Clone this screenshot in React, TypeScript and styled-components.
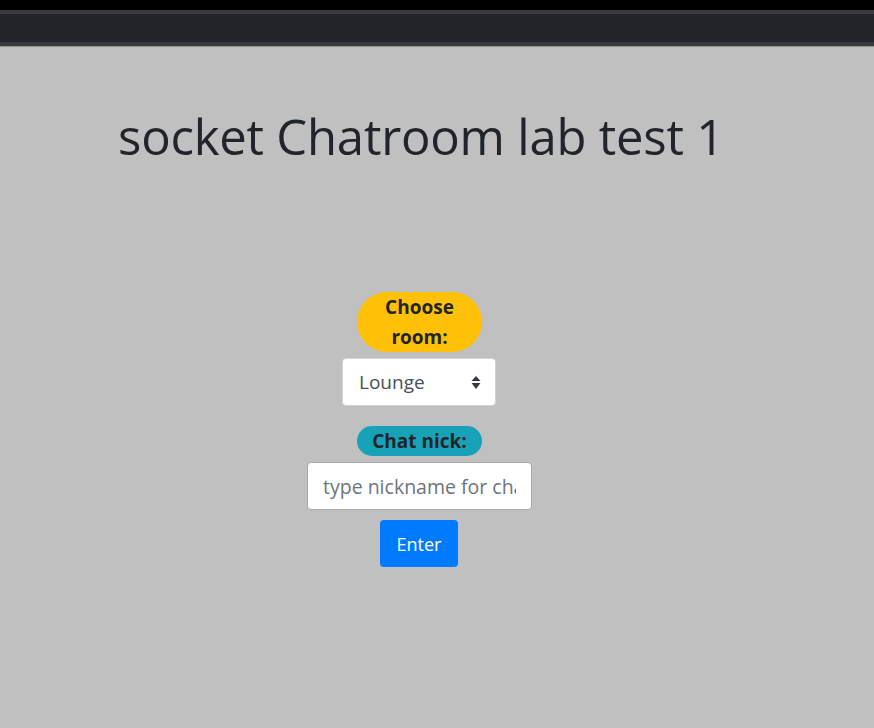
import React from "react";
import styled, { createGlobalStyle } from "styled-components";

const GlobalStyle = createGlobalStyle`
  html, body {
    margin: 0;
    padding: 0;
    background: #c0c0c0;
    font-family: "Open Sans", "Noto Sans", sans-serif;
    color: #212529;
  }
`;

const Page = styled.div`
  min-height: 728px;
  background: #c0c0c0;
`;

const TopStrip = styled.div`
  height: 10px;
  background: #000;
`;

const Navbar = styled.div`
  height: 28px;
  background: #212529;
  border-top: 4px solid #3a3a3c;
  border-bottom: 4px solid #3a3a3c;
  box-shadow: 0 1px 0 #8e8e8e;
`;

const Heading = styled.h1`
  margin: 0;
  padding: 52px 0 0 118px;
  height: 77px;
  font-size: 49px;
  font-weight: 500;
  line-height: 77px;
  letter-spacing: -0.2px;
  color: #212529;
`;

const Form = styled.div`
  display: flex;
  flex-direction: column;
  align-items: center;
  padding: 117px 35px 0 0;
`;

const Badge = styled.div<{ $bg: string }>`
  width: 125px;
  box-sizing: border-box;
  padding: 0 12px;
  border-radius: 30px;
  background: ${(p) => p.$bg};
  color: #212529;
  font-size: 19px;
  font-weight: 700;
  line-height: 30px;
  text-align: center;
`;

const SelectBox = styled.div`
  display: flex;
  align-items: center;
  justify-content: space-between;
  box-sizing: border-box;
  width: 154px;
  height: 48px;
  margin: 6px 1px 0 0;
  padding: 0 14px 0 16px;
  background: #fff;
  border: 1px solid #ced4da;
  border-radius: 4px;
  font-size: 19px;
  color: #495057;
`;

const Arrows = styled.svg`
  width: 10px;
  height: 16px;
`;

const Spacer = styled.div`
  height: 20px;
`;

const Input = styled.input`
  box-sizing: border-box;
  width: 225px;
  height: 48px;
  margin-top: 6px;
  padding: 0 15px;
  background: #fff;
  border: 1px solid #a8a8a8;
  border-radius: 4px;
  font-family: inherit;
  font-size: 19.5px;
  color: #495057;
  outline: none;
  &::placeholder {
    color: #6c757d;
  }
`;

const Button = styled.button`
  box-sizing: border-box;
  width: 78px;
  height: 47px;
  margin: 10px 1px 0 0;
  border: none;
  border-radius: 4px;
  background: #007bff;
  color: #fff;
  font-family: inherit;
  font-size: 18px;
`;

export default function App() {
  return (
    <Page>
      <GlobalStyle />
      <TopStrip />
      <Navbar />
      <Heading>socket Chatroom lab test 1</Heading>
      <Form>
        <Badge $bg="#ffc107">Choose room:</Badge>
        <SelectBox>
          <span>Lounge</span>
          <Arrows viewBox="0 0 10 16">
            <path d="M5 2 L9.5 7 H0.5 Z" fill="#343a40" />
            <path d="M5 15 L9.5 9 H0.5 Z" fill="#343a40" />
          </Arrows>
        </SelectBox>
        <Spacer />
        <Badge $bg="#17a2b8">Chat nick:</Badge>
        <Input placeholder="type nickname for chat" />
        <Button>Enter</Button>
      </Form>
    </Page>
  );
}
